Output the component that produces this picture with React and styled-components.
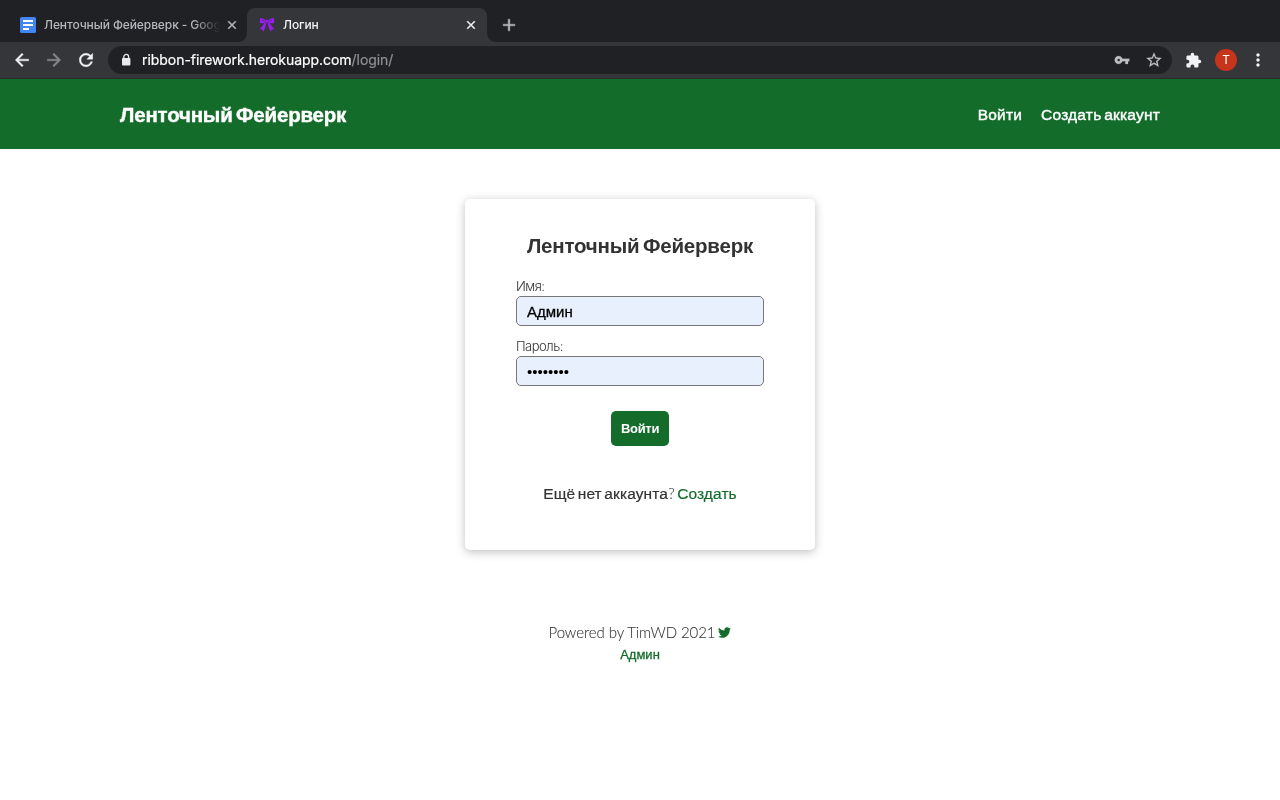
import React from "react";
import styled, { createGlobalStyle } from "styled-components";
import {
  MdArrowBack, MdArrowForward, MdRefresh, MdLock, MdVpnKey,
  MdStarBorder, MdExtension, MdMoreVert, MdClose, MdAdd,
} from "react-icons/md";
import { FaTwitter } from "react-icons/fa";

const green = "#146c2b";

const GlobalStyle = createGlobalStyle`
  * { box-sizing: border-box; }
  body { margin: 0; background: #fff; color: #333; font-family: "Liberation Sans", sans-serif; overflow: hidden; }
  svg { display: block; flex: none; }
  a { text-decoration: none; }
`;

const Screen = styled.div`
  width: 1280px;
  height: 800px;
  display: flex;
  flex-direction: column;
  will-change: transform;
`;

const TabStrip = styled.div`
  height: 42px;
  flex: none;
  background: #202124;
  display: flex;
  align-items: flex-end;
  padding-left: 8px;
`;

const Tab = styled.div`
  position: relative;
  width: ${(p) => (p.$active ? 240 : 239)}px;
  height: 34px;
  display: flex;
  align-items: center;
  padding: 0 ${(p) => (p.$active ? 9 : 8)}px 0 12px;
  border-radius: 8px 8px 0 0;
  color: ${(p) => (p.$active ? "#f1f3f4" : "#b5b8bc")};
  background: ${(p) => (p.$active ? "#35363a" : "transparent")};
  ${(p) => p.$active && `
    &::before, &::after {
      content: "";
      position: absolute;
      bottom: 0;
      width: 8px;
      height: 8px;
    }
    &::before { left: -8px; background: radial-gradient(circle at 0 0, transparent 7.5px, #35363a 8px); }
    &::after { right: -8px; background: radial-gradient(circle at 100% 0, transparent 7.5px, #35363a 8px); }
  `}
  & > svg:last-child path:not([fill="none"]) { stroke: currentColor; stroke-width: 0.8px; }
`;

const TabTitle = styled.span`
  flex: 1;
  margin: 0 3px 0 8px;
  white-space: nowrap;
  font: 500 12px/16px Inter, sans-serif;
  letter-spacing: -0.1px;
  ${(p) => p.$fade && "mask-image: linear-gradient(to right, #000 calc(100% - 28px), transparent calc(100% - 2px));"}
`;

const NewTab = styled.div`
  height: 34px;
  margin-left: 12px;
  display: flex;
  align-items: center;
  color: #b9bbbe;
  & path:not([fill="none"]) { stroke: currentColor; stroke-width: 0.5px; }
`;

const Toolbar = styled.div`
  height: 37px;
  flex: none;
  background: #35363a;
  border-bottom: 1px solid #2a2b2e;
  display: flex;
  align-items: center;
  padding: 0 12px;
  color: #f1f3f4;
`;

const NavButton = styled.div`
  width: 32px;
  display: flex;
  color: ${(p) => (p.$disabled ? "#87888b" : "#f1f3f4")};
  & path:not([fill="none"]) { stroke: currentColor; stroke-width: 0.5px; }
`;

const AddressBar = styled.div`
  width: 1064px;
  flex: none;
  height: 28px;
  border-radius: 14px;
  background: #202124;
  display: flex;
  align-items: center;
  padding: 0 9px 0 11px;
`;

const LockIcon = () => (
  <svg width="14" height="14" viewBox="0 0 14 14">
    <rect x="3" y="5" width="8.4" height="7.4" rx="0.9" fill="#e8eaed" />
    <path d="M4.8 5.4V3.8a2.4 2.4 0 0 1 4.8 0v1.6" fill="none" stroke="#e8eaed" strokeWidth="1.3" />
  </svg>
);

const Url = styled.div`
  flex: 1;
  margin-left: 9px;
  font: 400 14px/18px Inter, sans-serif;
  letter-spacing: -0.05px;
  color: #fff;
  -webkit-text-stroke: 0.2px;
`;

const UrlPath = styled.span`
  color: #8d8f92;
`;

const BarIcons = styled.div`
  display: flex;
  align-items: center;
  gap: 15px;
  color: #bdbfc2;
  & path:not([fill="none"]) { stroke: currentColor; stroke-width: 0.3px; }
`;

const Extensions = styled.div`
  margin-left: 13px;
`;

const Avatar = styled.div`
  width: 22px;
  height: 22px;
  flex: none;
  margin: 0 11px 0 13px;
  border-radius: 50%;
  background: #c5341b;
  display: flex;
  align-items: center;
  justify-content: center;
  font: 400 12px/22px Roboto, sans-serif;
  color: #fff;
`;

const SiteHeader = styled.header`
  height: 70px;
  flex: none;
  background: ${green};
  padding: 2px 120px 0;
  display: flex;
  align-items: center;
  justify-content: space-between;
`;

const Brand = styled.a`
  font-size: 20.5px;
  font-weight: 700;
  letter-spacing: -0.2px;
  word-spacing: -2px;
  color: #fff;
  -webkit-text-stroke: 0.4px;
`;

const Menu = styled.nav`
  display: flex;
  gap: 19px;
`;

const MenuLink = styled.a`
  font-size: 15.5px;
  line-height: 18px;
  color: #fff;
  -webkit-text-stroke: 0.4px;
  letter-spacing: 0.2px;
  word-spacing: -1.7px;
`;

const Main = styled.main`
  flex: 1;
  display: flex;
  flex-direction: column;
  align-items: center;
  padding-top: 50px;
`;

const Card = styled.form`
  width: 350px;
  height: 351px;
  border-radius: 5px;
  background: #fff;
  box-shadow: 0 2px 10px rgba(0, 0, 0, 0.25);
  padding: 35px 51px 0;
  display: flex;
  flex-direction: column;
  align-items: center;
`;

const Title = styled.h1`
  margin: 0 0 19px;
  font-size: 20.5px;
  line-height: 24px;
  font-weight: 700;
  letter-spacing: -0.2px;
  word-spacing: -2px;
  white-space: nowrap;
`;

const Field = styled.label`
  width: 248px;
  height: 60px;
  display: block;
  font: 300 13px/18px Inter, sans-serif;
  letter-spacing: -0.5px;
`;

const Input = styled.input`
  display: block;
  width: 248px;
  height: 30px;
  margin-top: 1px;
  padding: 0 10px;
  border: 1px solid #767676;
  border-radius: 5px;
  outline: 0;
  background: #e8f0fe;
  color: #000;
  font: 400 15px "Liberation Sans", sans-serif;
  -webkit-text-stroke: ${(p) => (p.type === "password" ? 0 : 0.3)}px;
`;

const Submit = styled.button`
  width: 58px;
  height: 35px;
  margin-top: 14px;
  padding: 0;
  border: 0;
  border-radius: 5px;
  background: ${green};
  color: #fff;
  font: 700 13px "Liberation Sans", sans-serif;
  letter-spacing: -0.3px;
`;

const Hint = styled.p`
  margin: 38px 0 0;
  font-size: 15.5px;
  line-height: 18px;
  letter-spacing: 0.1px;
  word-spacing: -1.9px;
  white-space: nowrap;
  -webkit-text-stroke: 0.2px;
`;

const QuestionMark = styled.span`
  font-family: Lato, sans-serif;
  font-weight: 300;
  -webkit-text-stroke: 0;
`;

const GreenLink = styled.a`
  color: ${green};
`;

const Footer = styled.footer`
  margin-top: 71px;
  display: flex;
  flex-direction: column;
  align-items: center;
`;

const Credit = styled.div`
  display: flex;
  align-items: center;
  gap: 3px;
  font: 300 15px/22px Lato, sans-serif;
  letter-spacing: -0.08px;
  -webkit-text-stroke: 0.1px;
`;

const AdminLink = styled(GreenLink)`
  font-size: 13px;
  line-height: 20px;
  margin-top: 2px;
  -webkit-text-stroke: 0.3px;
`;

const DocIcon = () => (
  <svg width="16" height="16" viewBox="0 0 16 16">
    <rect width="16" height="16" rx="1.5" fill="#4285f4" />
    <path d="M3 4h10M3 8h10M3 12h6" stroke="#fff" strokeWidth="2" />
  </svg>
);

const BowIcon = () => (
  <svg width="16" height="16" viewBox="0 0 16 16" fill="#9b1cf5">
    <path d="M1 1.2h2.2L7 3.3v2.3L3 6.4.8 5.8ZM15 1.2h-2.2L9 3.3v2.3l4 .8 2.2-.6Z" />
    <rect x="6.6" y="2.8" width="2.8" height="3" rx=".8" />
    <path d="M5.4 6 7.4 6.3 6 11 4.3 14.7 3.2 12.5.6 12.3 3.6 8.7ZM10.6 6 8.6 6.3 10 11l1.7 3.7 1.1-2.2 2.6-.2-3-3.6Z" />
    <path d="m2.8 3.2 2.6.8M10.6 4l2.6-.8M6.6 3.2v2.2M9.4 3.2v2.2" stroke="#35363a" strokeWidth=".5" />
  </svg>
);

export default function App() {
  return (
    <>
      <GlobalStyle />
      <Screen>
        <TabStrip>
          <Tab>
            <DocIcon />
            <TabTitle $fade>Ленточный Фейерверк - Goog</TabTitle>
            <MdClose size={14} />
          </Tab>
          <Tab $active>
            <BowIcon />
            <TabTitle>Логин</TabTitle>
            <MdClose size={14} />
          </Tab>
          <NewTab><MdAdd size={20} /></NewTab>
        </TabStrip>
        <Toolbar>
          <NavButton><MdArrowBack size={20} /></NavButton>
          <NavButton $disabled><MdArrowForward size={20} /></NavButton>
          <NavButton><MdRefresh size={20} /></NavButton>
          <AddressBar>
            <LockIcon />
            <Url>ribbon-firework.herokuapp.com<UrlPath>/login/</UrlPath></Url>
            <BarIcons>
              <MdVpnKey size={16} />
              <MdStarBorder size={18} />
            </BarIcons>
          </AddressBar>
          <Extensions><MdExtension size={17} /></Extensions>
          <Avatar>T</Avatar>
          <MdMoreVert size={20} />
        </Toolbar>
        <SiteHeader>
          <Brand>Ленточный Фейерверк</Brand>
          <Menu>
            <MenuLink>Войти</MenuLink>
            <MenuLink>Создать аккаунт</MenuLink>
          </Menu>
        </SiteHeader>
        <Main>
          <Card>
            <Title>Ленточный Фейерверк</Title>
            <Field>
              Имя:
              <Input readOnly value="Админ" />
            </Field>
            <Field>
              Пароль:
              <Input readOnly type="password" value="password" />
            </Field>
            <Submit type="button">Войти</Submit>
            <Hint>
              Ещё нет аккаунта<QuestionMark>? </QuestionMark>
              <GreenLink>Создать</GreenLink>
            </Hint>
          </Card>
          <Footer>
            <Credit>Powered by TimWD 2021 <FaTwitter size={13} color={green} /></Credit>
            <AdminLink>Админ</AdminLink>
          </Footer>
        </Main>
      </Screen>
    </>
  );
}
